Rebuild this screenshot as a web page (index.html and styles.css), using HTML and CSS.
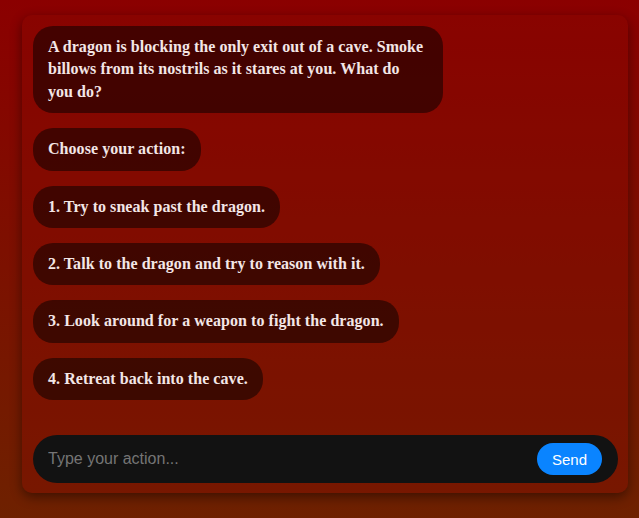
FILE: index.html
```html
<!DOCTYPE html>
<html>
<head>
<meta charset="utf-8">
<link rel="stylesheet" href="styles.css">
</head>
<body>
<div class="card">
  <div class="messages">
    <div class="bubble">A dragon is blocking the only exit out of a cave. Smoke billows from its nostrils as it stares at you. What do you do?</div>
    <div class="bubble">Choose your action:</div>
    <div class="bubble">1. Try to sneak past the dragon.</div>
    <div class="bubble">2. Talk to the dragon and try to reason with it.</div>
    <div class="bubble">3. Look around for a weapon to fight the dragon.</div>
    <div class="bubble">4. Retreat back into the cave.</div>
  </div>
  <div class="input-bar">
    <input class="action-input" type="text" placeholder="Type your action...">
    <button class="send-btn">Send</button>
  </div>
</div>
</body>
</html>
```
FILE: styles.css
```css
html, body {
  margin: 0;
  height: 100%;
}
body {
  background: linear-gradient(to bottom, #8b0000 0%, #6e2100 100%);
  padding: 15px 11px 0 22px;
  box-sizing: border-box;
  font-family: "Liberation Serif", serif;
}
.card {
  height: 478px;
  box-sizing: border-box;
  padding: 11px 10px 10px 11px;
  border-radius: 10px;
  background: rgba(135, 10, 0, 0.35);
  box-shadow: 0 4px 12px rgba(0, 0, 0, 0.45);
  display: flex;
  flex-direction: column;
}
.messages {
  flex: 1;
  display: flex;
  flex-direction: column;
  align-items: flex-start;
  gap: 15px;
}
.bubble {
  max-width: 70%;
  box-sizing: border-box;
  padding: 10px 15px;
  border-radius: 20px;
  background: rgba(0, 0, 0, 0.5);
  color: #f3e6e6;
  font-size: 16px;
  font-weight: bold;
  line-height: 22.4px;
  letter-spacing: 0.05px;
}
.input-bar {
  height: 48px;
  border-radius: 24px;
  background: #121212;
  display: flex;
  align-items: center;
  padding: 0 16px 0 15px;
}
.action-input {
  flex: 1;
  background: transparent;
  border: none;
  outline: none;
  font-family: "Liberation Sans", Arial, sans-serif;
  font-size: 16px;
  color: #ddd;
  padding: 0;
}
.action-input::placeholder {
  color: #757575;
}
.send-btn {
  width: 65px;
  height: 32px;
  border: none;
  border-radius: 16px;
  background: #0a84ff;
  color: #fff;
  font-family: "Liberation Sans", Arial, sans-serif;
  font-size: 15px;
  padding: 0;
}
```
